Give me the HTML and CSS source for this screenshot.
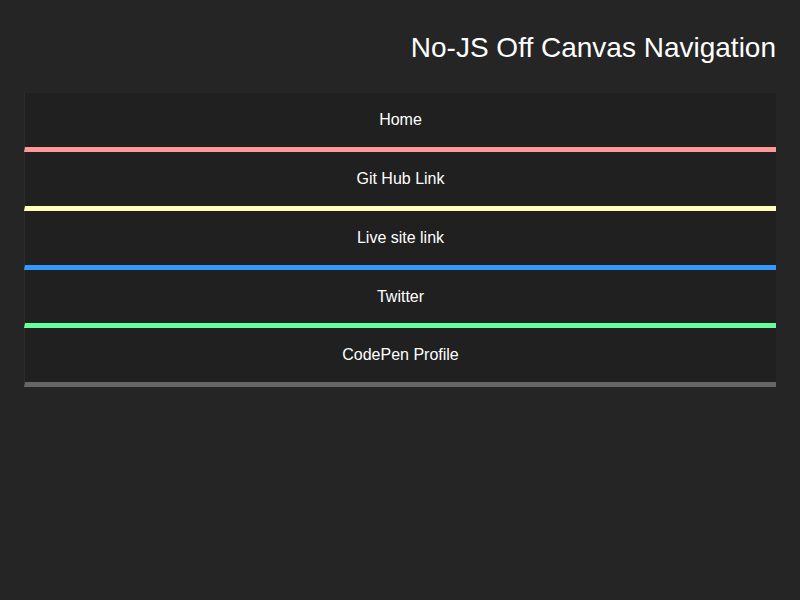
FILE: index.html
```html
<!DOCTYPE html>
<html lang="en">
<head>
<meta charset="utf-8">
<title>No-JS Off Canvas Navigation</title>
<link rel="stylesheet" href="styles.css">
</head>
<body>
<div class="page">
  <h1 class="title">No-JS Off Canvas Navigation</h1>
  <nav class="menu">
    <a class="item item-pink" href="#">Home</a>
    <a class="item item-yellow" href="#">Git Hub Link</a>
    <a class="item item-blue" href="#">Live site link</a>
    <a class="item item-green" href="#">Twitter</a>
    <a class="item item-gray" href="#">CodePen Profile</a>
  </nav>
</div>
</body>
</html>
```

FILE: styles.css
```css
html, body {
  margin: 0;
  padding: 0;
  background: #252525;
  color: #ffffff;
  font-family: "Liberation Sans", Arial, sans-serif;
}

.page {
  padding: 0 24px;
}

.title {
  margin: 0;
  padding-top: 32px;
  font-size: 28px;
  line-height: 32px;
  font-weight: normal;
  text-align: right;
  color: #ffffff;
}

.menu {
  margin-top: 29.25px;
  display: flex;
  flex-direction: column;
}

.item {
  display: block;
  box-sizing: border-box;
  height: 58.75px;
  padding-top: 18px;
  line-height: 18px;
  font-size: 16px;
  text-align: center;
  color: #ffffff;
  text-decoration: none;
  background: #202020;
  border-left: 1px solid #2c2c2c;
  border-bottom: 5px solid #666666;
}

.item-pink { border-bottom-color: #ff9999; }
.item-yellow { border-bottom-color: #ffffbb; }
.item-blue { border-bottom-color: #3399ff; }
.item-green { border-bottom-color: #66ff99; }
.item-gray { border-bottom-color: #666666; }
```
